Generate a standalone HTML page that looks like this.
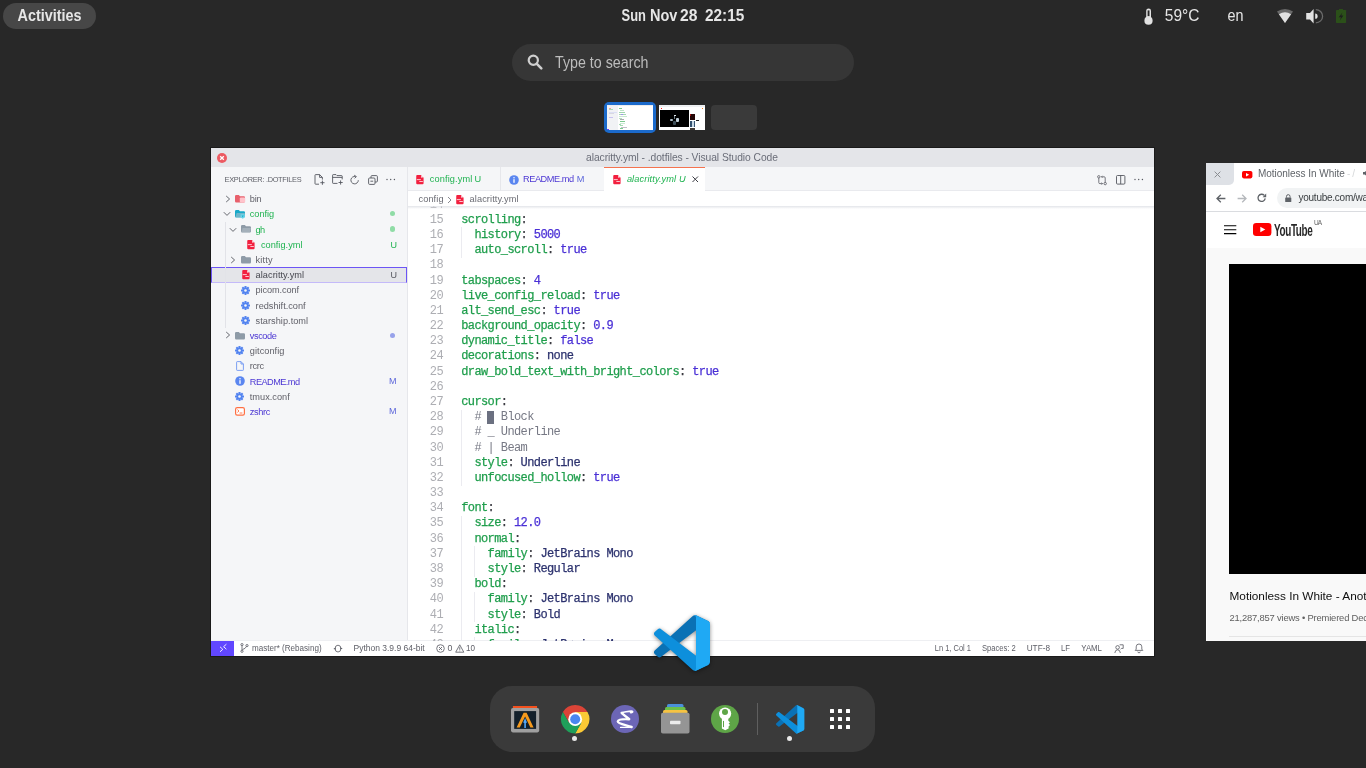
<!DOCTYPE html>
<html><head><meta charset="utf-8"><style>
html,body{margin:0;padding:0;width:1366px;height:768px;overflow:hidden;background:#282828;}
body{position:relative;font-family:"Liberation Sans",sans-serif;}
div,svg{position:absolute;}
.t{white-space:pre;}
svg{overflow:visible;}
</style></head><body>
<div style="left:0;top:0;width:1366px;height:768px;will-change:transform;background:#282828">
<div style="left:3px;top:3px;width:93px;height:26px;background:#474747;border-radius:13px;"></div>
<div class="t" style="left:17.50px;top:8.00px;font-size:14.39px;line-height:16.00px;color:#e6e6e6;font-family:'Liberation Sans', sans-serif;font-weight:bold;transform:scaleY(1.111);transform-origin:0 13px;">Activities</div>
<div class="t" style="left:621.60px;top:9.00px;font-size:12.92px;line-height:15.00px;color:#e6e6e6;font-family:'Liberation Sans', sans-serif;font-weight:bold;transform:scaleY(1.237);transform-origin:0 12px;">Sun</div>
<div class="t" style="left:650.00px;top:8.00px;font-size:14.5px;line-height:16.00px;color:#e6e6e6;font-family:'Liberation Sans', sans-serif;font-weight:bold;transform:scaleY(1.103);transform-origin:0 13px;">Nov</div>
<div class="t" style="left:680.00px;top:7.00px;font-size:15.64px;line-height:17.00px;color:#e6e6e6;font-family:'Liberation Sans', sans-serif;font-weight:bold;transform:scaleY(1.022);transform-origin:0 14px;">28</div>
<div class="t" style="left:705.00px;top:7.00px;font-size:15.4px;line-height:17.00px;color:#e6e6e6;font-family:'Liberation Sans', sans-serif;font-weight:bold;transform:scaleY(1.038);transform-origin:0 14px;">22:15</div>
<div class="t" style="left:1164.80px;top:7.00px;font-size:15.49px;line-height:17.00px;color:#e6e6e6;font-family:'Liberation Sans', sans-serif;transform:scaleY(1.032);transform-origin:0 14px;">59°C</div>
<div class="t" style="left:1227.60px;top:8.00px;font-size:14.38px;line-height:16.00px;color:#e6e6e6;font-family:'Liberation Sans', sans-serif;transform:scaleY(1.112);transform-origin:0 13px;">en</div>
<svg style="left:1143.5px;top:7.5px" width="9" height="17" viewBox="0 0 9 17"><rect x="2.2" y="0.4" width="4.8" height="11" rx="2.4" fill="#e2e2e2"/><rect x="3.6" y="2.4" width="1.9" height="5.8" fill="#282828"/><circle cx="4.5" cy="12.7" r="4.1" fill="#e2e2e2"/></svg>
<svg style="left:1277px;top:9px" width="16" height="14" viewBox="0 0 16 14"><path d="M8 14 L-0.03 2.53 A14 14 0 0 1 16.03 2.53Z" fill="#6a6a6a"/><path d="M8 14 L1.92 5.32 A10.6 10.6 0 0 1 14.08 5.32Z" fill="#e2e2e2"/></svg>
<svg style="left:1305.5px;top:8.8px" width="16" height="15" viewBox="0 0 16 15"><path d="M0.2 3.9 H4 L7.6 0 V14.4 L4 10.5 H0.2Z" fill="#e2e2e2"/><path d="M9.2 4.6 A2.4 2.6 0 0 1 9.2 9.8Z" fill="#e2e2e2"/><path d="M9.8 0.6 A6.8 6.6 0 0 1 9.8 13.8" stroke="#6c6c6c" stroke-width="1.3" fill="none"/></svg>
<svg style="left:1336px;top:9px" width="10.1" height="14" viewBox="0 0 10.1 14"><rect x="3" y="0" width="4" height="1.5" fill="#2b5019"/><rect x="0" y="1" width="10.1" height="12.9" rx=".6" fill="#2b5019"/><path d="M6.4 3.4 L2.8 8.2 H5 L3.9 11.4 L7.4 6.6 H5.2Z" fill="#1e1e1e"/></svg>
<div style="left:512px;top:44px;width:342px;height:37px;background:#363636;border-radius:18.5px;"></div>
<svg style="left:527px;top:54px" width="16" height="16" viewBox="0 0 16 16"><circle cx="6.3" cy="6.3" r="4.6" stroke="#cfcfcf" stroke-width="2.2" fill="none"/><path d="M9.6 9.6 L14.3 14.3" stroke="#cfcfcf" stroke-width="2.6" stroke-linecap="round"/></svg>
<div class="t" style="left:555.00px;top:55.00px;font-size:14.25px;line-height:16.00px;color:#bdbdbd;font-family:'Liberation Sans', sans-serif;transform:scaleY(1.112);transform-origin:0 13px;">Type to search</div>
<div style="left:604px;top:102px;width:52px;height:31px;background:#1b6acb;border-radius:5px;"></div>
<div style="left:607px;top:105px;width:46px;height:25px;background:#ffffff;"></div>
<div style="left:607px;top:105px;width:10.5px;height:25px;background:#f1f2f5;"></div>
<div style="left:607px;top:105px;width:46px;height:1px;background:#ecedf0;"></div>
<div style="left:619px;top:108px;width:3px;height:1px;background:#7dc98f;"></div>
<div style="left:620px;top:109.5px;width:4px;height:1px;background:#bfe3c8;"></div>
<div style="left:619px;top:112px;width:6px;height:1px;background:#9fd6ad;"></div>
<div style="left:619px;top:114px;width:7px;height:1px;background:#a6d9b3;"></div>
<div style="left:621px;top:114px;width:1.5px;height:1px;background:#9d94ea;"></div>
<div style="left:619px;top:116px;width:7.5px;height:1px;background:#c8e8d0;"></div>
<div style="left:619px;top:117.5px;width:3px;height:1px;background:#b5dfc0;"></div>
<div style="left:620px;top:119px;width:4px;height:1px;background:#aaaaaf;"></div>
<div style="left:620px;top:121px;width:5px;height:1px;background:#7dc98f;"></div>
<div style="left:620px;top:122.5px;width:5px;height:1px;background:#c9e9d2;"></div>
<div style="left:619px;top:124px;width:2px;height:1px;background:#a6d9b3;"></div>
<div style="left:620px;top:125px;width:3px;height:1px;background:#a6d9b3;"></div>
<div style="left:621px;top:126.5px;width:6px;height:1px;background:#c0c0c8;"></div>
<div style="left:620px;top:128px;width:3px;height:1px;background:#7dc98f;"></div>
<div style="left:608.5px;top:107.5px;width:2px;height:1px;background:#f29aa0;"></div>
<div style="left:608.5px;top:109px;width:4px;height:1px;background:#a6dcb4;"></div>
<div style="left:608.5px;top:111.5px;width:8px;height:1px;background:#dcdff5;"></div>
<div style="left:608.5px;top:113px;width:5px;height:1px;background:#d8d8e0;"></div>
<div style="left:608.5px;top:117px;width:4px;height:1px;background:#c9c2f0;"></div>
<div style="left:607px;top:129px;width:1.5px;height:1px;background:#6147ff;"></div>
<div style="left:659px;top:105px;width:46px;height:25px;background:#ffffff;"></div>
<div style="left:659px;top:105px;width:46px;height:1.5px;background:#eef0f2;"></div>
<div style="left:660px;top:110px;width:28.8px;height:16.8px;background:#000000;"></div>
<div style="left:673.6px;top:114.6px;width:2px;height:1.4px;background:#dfe6ea;"></div>
<div style="left:674.1px;top:116px;width:1.2px;height:3px;background:#6d7b84;"></div>
<div style="left:670.2px;top:118.6px;width:3px;height:2.6px;background:#aebfcb;border-radius:1px;"></div>
<div style="left:676px;top:118.4px;width:3px;height:3.2px;background:#c2d0da;border-radius:1px;"></div>
<div style="left:672.8px;top:121.4px;width:3.4px;height:3.2px;background:#3e4e58;border-radius:1px;"></div>
<div style="left:660.5px;top:108px;width:1.5px;height:1px;background:#ff2020;"></div>
<div style="left:690px;top:114px;width:5px;height:5.5px;background:#240606;"></div>
<div style="left:690px;top:114px;width:1px;height:2px;background:#a01010;"></div>
<div style="left:690px;top:121px;width:5px;height:6px;background:#32506e;"></div>
<div style="left:692px;top:121px;width:1.5px;height:6px;background:#c8d8e4;"></div>
<div style="left:690px;top:128px;width:5px;height:2px;background:#403a36;"></div>
<div style="left:696px;top:120px;width:2.5px;height:1px;background:#202020;"></div>
<div style="left:702px;top:108px;width:1px;height:1px;background:#f08020;"></div>
<div style="left:711px;top:105px;width:46px;height:25px;background:#3a3a3a;border-radius:4px;"></div>
<div style="left:211px;top:148px;width:943px;height:508px;background:#ffffff;box-shadow:0 0 0 1px rgba(0,0,0,.35);"></div>
<div style="left:211px;top:148px;width:943px;height:19px;background:#e4e5e9;"></div>
<svg style="left:217px;top:152.5px" width="10" height="10" viewBox="0 0 10 10"><circle cx="5" cy="5" r="5" fill="#ec5a62"/><path d="M3.2 3.2L6.8 6.8M6.8 3.2L3.2 6.8" stroke="#fff" stroke-width="1.3"/></svg>
<div class="t" style="left:586.00px;top:152.00px;font-size:10.3px;line-height:11.00px;color:#6a6d78;font-family:'Liberation Sans', sans-serif;letter-spacing:-0.063px;">alacritty.yml - .dotfiles - Visual Studio Code</div>
<div style="left:211px;top:167px;width:196px;height:474px;background:#f5f6f8;"></div>
<div style="left:407px;top:167px;width:1px;height:474px;background:#e6e7eb;"></div>
<div class="t" style="left:224.60px;top:175.00px;font-size:7.4px;line-height:9.00px;color:#5f6068;font-family:'Liberation Sans', sans-serif;letter-spacing:-0.306px;">EXPLORER: .DOTFILES</div>
<div style="left:408px;top:167px;width:746px;height:24px;background:#f5f6f8;"></div>
<div style="left:408px;top:190px;width:746px;height:1px;background:#e9eaee;"></div>
<div style="left:500px;top:167px;width:1px;height:24px;background:#e6e7eb;"></div>
<div style="left:604px;top:167px;width:101px;height:24px;background:#ffffff;"></div>
<div style="left:604px;top:167px;width:101px;height:1px;background:#f5734f;"></div>
<div style="left:408px;top:191px;width:746px;height:15px;background:#ffffff;"></div>
<div style="left:211px;top:641px;width:943px;height:15px;background:#ffffff;"></div>
<div style="left:211px;top:640px;width:943px;height:1px;background:#eeeff2;"></div>
<div style="left:211px;top:641px;width:23px;height:15px;background:#6147ff;"></div>
<div style="left:211px;top:267px;width:196px;height:16px;background:#e4e5e9;box-sizing:border-box;border:1px solid #6c55f5;border-bottom-color:#c4baf9;"></div>
<div style="left:225px;top:222px;width:1px;height:106px;background:#e2e3e8;"></div>
<svg style="left:224.5px;top:194.8px" width="6" height="8" viewBox="0 0 6 8"><path d="M1.2 1 L4.6 4 L1.2 7" stroke="#55575f" stroke-width="0.9" fill="none"/></svg>
<svg style="left:235px;top:195.10000000000002px" width="10" height="8" viewBox="0 0 10 8"><path d="M0 1.2 Q0 0 1.2 0 H3.8 L5 1.2 H8.8 Q10 1.2 10 2.4 V6.2 Q10 7.4 8.8 7.4 H1.2 Q0 7.4 0 6.2Z" fill="#e8606c"/><rect x="4.8" y="2.6" width="5.4" height="5" rx="1" fill="#ffc3cb"/></svg>
<div class="t" style="left:249.80px;top:194.00px;font-size:9.2px;line-height:10.00px;color:#616169;font-family:'Liberation Sans', sans-serif;letter-spacing:-0.208px;">bin</div>
<svg style="left:222.7px;top:211.485px" width="8" height="6" viewBox="0 0 8 6"><path d="M0.8 1.2 L4 4.4 L7.2 1.2" stroke="#55575f" stroke-width="0.9" fill="none"/></svg>
<svg style="left:235px;top:210.28500000000003px" width="10" height="8" viewBox="0 0 10 8"><path d="M0 1.2 Q0 0 1.2 0 H3.8 L5 1.2 H8.8 Q10 1.2 10 2.4 V6.2 Q10 7.4 8.8 7.4 H1.2 Q0 7.4 0 6.2Z" fill="#17a9c9"/><path d="M1.6 3 H10 L9 7.4 H0.4Z" fill="#b7c1ca" opacity=".55"/><path d="M5.6 4.2 H9.8 V6.4 Q9.8 7.8 7.7 8.8 Q5.6 7.8 5.6 6.4Z" fill="#6fd6ea"/><path d="M6.6 5.4 H8.8 L7.7 7.4Z" fill="#17a9c9"/></svg>
<div class="t" style="left:249.80px;top:209.00px;font-size:9.2px;line-height:10.00px;color:#1fb350;font-family:'Liberation Sans', sans-serif;letter-spacing:-0.033px;">config</div>
<div style="left:390px;top:211.29px;width:5.2px;height:5.2px;border-radius:50%;background:#8fdca6"></div>
<svg style="left:228.5px;top:226.67000000000002px" width="8" height="6" viewBox="0 0 8 6"><path d="M0.8 1.2 L4 4.4 L7.2 1.2" stroke="#55575f" stroke-width="0.9" fill="none"/></svg>
<svg style="left:240.8px;top:225.47000000000003px" width="10" height="8" viewBox="0 0 10 8"><path d="M0 1.2 Q0 0 1.2 0 H3.8 L5 1.2 H8.8 Q10 1.2 10 2.4 V6.2 Q10 7.4 8.8 7.4 H1.2 Q0 7.4 0 6.2Z" fill="#8e9ba7"/><path d="M1.6 3 H10 L9 7.4 H0.4Z" fill="#b7c1ca" opacity=".55"/></svg>
<div class="t" style="left:255.60px;top:225.00px;font-size:9.2px;line-height:10.00px;color:#1fb350;font-family:'Liberation Sans', sans-serif;letter-spacing:-0.619px;">gh</div>
<div style="left:390px;top:226.47px;width:5.2px;height:5.2px;border-radius:50%;background:#8fdca6"></div>
<svg style="left:247.2px;top:239.75500000000002px" width="7.8" height="9.2" viewBox="0 0 8 10"><path d="M0 1.1 Q0 0 1.1 0 H5 L8 3 V8.9 Q8 10 6.9 10 H1.1 Q0 10 0 8.9Z" fill="#f2203f"/><path d="M0.6 5 H5 M3.4 7.1 H7.2" stroke="#ffd6dc" stroke-width="1"/><circle cx="6.2" cy="2.1" r=".9" fill="#fff"/></svg>
<div class="t" style="left:260.90px;top:240.00px;font-size:9.2px;line-height:10.00px;color:#1fb350;font-family:'Liberation Sans', sans-serif;letter-spacing:0.027px;">config.yml</div>
<div class="t" style="left:390.50px;top:240.00px;font-size:9px;line-height:10.00px;color:#1fb350;font-family:'Liberation Sans', sans-serif;">U</div>
<svg style="left:230.3px;top:255.54000000000002px" width="6" height="8" viewBox="0 0 6 8"><path d="M1.2 1 L4.6 4 L1.2 7" stroke="#55575f" stroke-width="0.9" fill="none"/></svg>
<svg style="left:240.8px;top:255.84000000000003px" width="10" height="8" viewBox="0 0 10 8"><path d="M0 1.2 Q0 0 1.2 0 H3.8 L5 1.2 H8.8 Q10 1.2 10 2.4 V6.2 Q10 7.4 8.8 7.4 H1.2 Q0 7.4 0 6.2Z" fill="#8e9ba7"/></svg>
<div class="t" style="left:255.60px;top:255.00px;font-size:9.2px;line-height:10.00px;color:#616169;font-family:'Liberation Sans', sans-serif;letter-spacing:0.143px;">kitty</div>
<svg style="left:241.60000000000002px;top:270.125px" width="7.8" height="9.2" viewBox="0 0 8 10"><path d="M0 1.1 Q0 0 1.1 0 H5 L8 3 V8.9 Q8 10 6.9 10 H1.1 Q0 10 0 8.9Z" fill="#f2203f"/><path d="M0.6 5 H5 M3.4 7.1 H7.2" stroke="#ffd6dc" stroke-width="1"/><circle cx="6.2" cy="2.1" r=".9" fill="#fff"/></svg>
<div class="t" style="left:255.60px;top:270.00px;font-size:9.2px;line-height:10.00px;color:#45464e;font-family:'Liberation Sans', sans-serif;letter-spacing:0.057px;">alacritty.yml</div>
<div class="t" style="left:390.50px;top:270.00px;font-size:9px;line-height:10.00px;color:#55565e;font-family:'Liberation Sans', sans-serif;">U</div>
<svg style="left:240.8px;top:285.51000000000005px" width="9" height="9" viewBox="0 0 9 9"><g transform="translate(4.5 4.5)"><circle r="3.1" fill="#5384f0"/><rect x="-1.05" y="-4.5" width="2.1" height="2.4" rx=".4" fill="#5384f0" transform="rotate(0)"/><rect x="-1.05" y="-4.5" width="2.1" height="2.4" rx=".4" fill="#5384f0" transform="rotate(45)"/><rect x="-1.05" y="-4.5" width="2.1" height="2.4" rx=".4" fill="#5384f0" transform="rotate(90)"/><rect x="-1.05" y="-4.5" width="2.1" height="2.4" rx=".4" fill="#5384f0" transform="rotate(135)"/><rect x="-1.05" y="-4.5" width="2.1" height="2.4" rx=".4" fill="#5384f0" transform="rotate(180)"/><rect x="-1.05" y="-4.5" width="2.1" height="2.4" rx=".4" fill="#5384f0" transform="rotate(225)"/><rect x="-1.05" y="-4.5" width="2.1" height="2.4" rx=".4" fill="#5384f0" transform="rotate(270)"/><rect x="-1.05" y="-4.5" width="2.1" height="2.4" rx=".4" fill="#5384f0" transform="rotate(315)"/><circle r="1.3" fill="#f5f6f8"/></g></svg>
<div class="t" style="left:255.60px;top:285.00px;font-size:9.2px;line-height:10.00px;color:#616169;font-family:'Liberation Sans', sans-serif;letter-spacing:-0.114px;">picom.conf</div>
<svg style="left:240.8px;top:300.69500000000005px" width="9" height="9" viewBox="0 0 9 9"><g transform="translate(4.5 4.5)"><circle r="3.1" fill="#5384f0"/><rect x="-1.05" y="-4.5" width="2.1" height="2.4" rx=".4" fill="#5384f0" transform="rotate(0)"/><rect x="-1.05" y="-4.5" width="2.1" height="2.4" rx=".4" fill="#5384f0" transform="rotate(45)"/><rect x="-1.05" y="-4.5" width="2.1" height="2.4" rx=".4" fill="#5384f0" transform="rotate(90)"/><rect x="-1.05" y="-4.5" width="2.1" height="2.4" rx=".4" fill="#5384f0" transform="rotate(135)"/><rect x="-1.05" y="-4.5" width="2.1" height="2.4" rx=".4" fill="#5384f0" transform="rotate(180)"/><rect x="-1.05" y="-4.5" width="2.1" height="2.4" rx=".4" fill="#5384f0" transform="rotate(225)"/><rect x="-1.05" y="-4.5" width="2.1" height="2.4" rx=".4" fill="#5384f0" transform="rotate(270)"/><rect x="-1.05" y="-4.5" width="2.1" height="2.4" rx=".4" fill="#5384f0" transform="rotate(315)"/><circle r="1.3" fill="#f5f6f8"/></g></svg>
<div class="t" style="left:255.60px;top:301.00px;font-size:9.2px;line-height:10.00px;color:#616169;font-family:'Liberation Sans', sans-serif;letter-spacing:-0.003px;">redshift.conf</div>
<svg style="left:240.8px;top:315.88000000000005px" width="9" height="9" viewBox="0 0 9 9"><g transform="translate(4.5 4.5)"><circle r="3.1" fill="#5384f0"/><rect x="-1.05" y="-4.5" width="2.1" height="2.4" rx=".4" fill="#5384f0" transform="rotate(0)"/><rect x="-1.05" y="-4.5" width="2.1" height="2.4" rx=".4" fill="#5384f0" transform="rotate(45)"/><rect x="-1.05" y="-4.5" width="2.1" height="2.4" rx=".4" fill="#5384f0" transform="rotate(90)"/><rect x="-1.05" y="-4.5" width="2.1" height="2.4" rx=".4" fill="#5384f0" transform="rotate(135)"/><rect x="-1.05" y="-4.5" width="2.1" height="2.4" rx=".4" fill="#5384f0" transform="rotate(180)"/><rect x="-1.05" y="-4.5" width="2.1" height="2.4" rx=".4" fill="#5384f0" transform="rotate(225)"/><rect x="-1.05" y="-4.5" width="2.1" height="2.4" rx=".4" fill="#5384f0" transform="rotate(270)"/><rect x="-1.05" y="-4.5" width="2.1" height="2.4" rx=".4" fill="#5384f0" transform="rotate(315)"/><circle r="1.3" fill="#f5f6f8"/></g></svg>
<div class="t" style="left:255.60px;top:316.00px;font-size:9.2px;line-height:10.00px;color:#616169;font-family:'Liberation Sans', sans-serif;letter-spacing:0.035px;">starship.toml</div>
<svg style="left:224.5px;top:331.46500000000003px" width="6" height="8" viewBox="0 0 6 8"><path d="M1.2 1 L4.6 4 L1.2 7" stroke="#55575f" stroke-width="0.9" fill="none"/></svg>
<svg style="left:235px;top:331.76500000000004px" width="10" height="8" viewBox="0 0 10 8"><path d="M0 1.2 Q0 0 1.2 0 H3.8 L5 1.2 H8.8 Q10 1.2 10 2.4 V6.2 Q10 7.4 8.8 7.4 H1.2 Q0 7.4 0 6.2Z" fill="#8e9ba7"/></svg>
<div class="t" style="left:249.80px;top:331.00px;font-size:9.2px;line-height:10.00px;color:#4c37d3;font-family:'Liberation Sans', sans-serif;letter-spacing:-0.402px;">vscode</div>
<div style="left:390px;top:332.77px;width:5.2px;height:5.2px;border-radius:50%;background:#97a2ea"></div>
<svg style="left:235px;top:346.25px" width="9" height="9" viewBox="0 0 9 9"><g transform="translate(4.5 4.5)"><circle r="3.1" fill="#5384f0"/><rect x="-1.05" y="-4.5" width="2.1" height="2.4" rx=".4" fill="#5384f0" transform="rotate(0)"/><rect x="-1.05" y="-4.5" width="2.1" height="2.4" rx=".4" fill="#5384f0" transform="rotate(45)"/><rect x="-1.05" y="-4.5" width="2.1" height="2.4" rx=".4" fill="#5384f0" transform="rotate(90)"/><rect x="-1.05" y="-4.5" width="2.1" height="2.4" rx=".4" fill="#5384f0" transform="rotate(135)"/><rect x="-1.05" y="-4.5" width="2.1" height="2.4" rx=".4" fill="#5384f0" transform="rotate(180)"/><rect x="-1.05" y="-4.5" width="2.1" height="2.4" rx=".4" fill="#5384f0" transform="rotate(225)"/><rect x="-1.05" y="-4.5" width="2.1" height="2.4" rx=".4" fill="#5384f0" transform="rotate(270)"/><rect x="-1.05" y="-4.5" width="2.1" height="2.4" rx=".4" fill="#5384f0" transform="rotate(315)"/><circle r="1.3" fill="#f5f6f8"/></g></svg>
<div class="t" style="left:249.80px;top:346.00px;font-size:9.2px;line-height:10.00px;color:#616169;font-family:'Liberation Sans', sans-serif;letter-spacing:0.048px;">gitconfig</div>
<svg style="left:235.6px;top:361.035px" width="8" height="10" viewBox="0 0 8 10"><path d="M0.6 1.2 Q0.6 0.6 1.2 0.6 H5 L7.4 3 V8.8 Q7.4 9.4 6.8 9.4 H1.2 Q0.6 9.4 0.6 8.8Z M5 0.6 V3 H7.4" stroke="#6e95f2" stroke-width="0.9" fill="none"/></svg>
<div class="t" style="left:249.80px;top:361.00px;font-size:9.2px;line-height:10.00px;color:#616169;font-family:'Liberation Sans', sans-serif;letter-spacing:-0.354px;">rcrc</div>
<svg style="left:235px;top:376.21999999999997px" width="10" height="10" viewBox="0 0 10 10"><circle cx="5" cy="5" r="4.8" fill="#5a86f0"/><rect x="4.35" y="4.2" width="1.3" height="3.6" fill="#fff"/><circle cx="5" cy="2.8" r=".75" fill="#fff"/></svg>
<div class="t" style="left:249.80px;top:377.00px;font-size:9.2px;line-height:10.00px;color:#4c37d3;font-family:'Liberation Sans', sans-serif;letter-spacing:-0.547px;">README.md</div>
<div class="t" style="left:388.90px;top:376.00px;font-size:9px;line-height:10.00px;color:#5b66da;font-family:'Liberation Sans', sans-serif;">M</div>
<svg style="left:235px;top:391.80500000000006px" width="9" height="9" viewBox="0 0 9 9"><g transform="translate(4.5 4.5)"><circle r="3.1" fill="#5384f0"/><rect x="-1.05" y="-4.5" width="2.1" height="2.4" rx=".4" fill="#5384f0" transform="rotate(0)"/><rect x="-1.05" y="-4.5" width="2.1" height="2.4" rx=".4" fill="#5384f0" transform="rotate(45)"/><rect x="-1.05" y="-4.5" width="2.1" height="2.4" rx=".4" fill="#5384f0" transform="rotate(90)"/><rect x="-1.05" y="-4.5" width="2.1" height="2.4" rx=".4" fill="#5384f0" transform="rotate(135)"/><rect x="-1.05" y="-4.5" width="2.1" height="2.4" rx=".4" fill="#5384f0" transform="rotate(180)"/><rect x="-1.05" y="-4.5" width="2.1" height="2.4" rx=".4" fill="#5384f0" transform="rotate(225)"/><rect x="-1.05" y="-4.5" width="2.1" height="2.4" rx=".4" fill="#5384f0" transform="rotate(270)"/><rect x="-1.05" y="-4.5" width="2.1" height="2.4" rx=".4" fill="#5384f0" transform="rotate(315)"/><circle r="1.3" fill="#f5f6f8"/></g></svg>
<div class="t" style="left:249.80px;top:392.00px;font-size:9.2px;line-height:10.00px;color:#616169;font-family:'Liberation Sans', sans-serif;letter-spacing:0.023px;">tmux.conf</div>
<svg style="left:235px;top:407.09px" width="10" height="9" viewBox="0 0 10 9"><rect x="0.6" y="0.6" width="8.8" height="7.6" rx="1.6" fill="#fff" stroke="#ff7043" stroke-width="1.2"/><path d="M2.4 2.6 L4 4 L2.4 5.4 M4.6 6 H7.4" stroke="#ff7043" stroke-width="0.9" fill="none"/></svg>
<div class="t" style="left:249.80px;top:407.00px;font-size:9.2px;line-height:10.00px;color:#4c37d3;font-family:'Liberation Sans', sans-serif;letter-spacing:-0.363px;">zshrc</div>
<div class="t" style="left:388.90px;top:406.00px;font-size:9px;line-height:10.00px;color:#5b66da;font-family:'Liberation Sans', sans-serif;">M</div>
<svg style="left:314px;top:174px" width="12" height="11" viewBox="0 0 12 11"><path d="M1 1.2 Q1 0.6 1.6 0.6 H5.6 L8.4 3.4 V5.6 M8.4 3.4 H5.6 V0.6 M1 1.2 V9.6 Q1 10.2 1.6 10.2 H5" stroke="#55575f" stroke-width="0.9" fill="none"/><path d="M8.4 6.6 V10.8 M6.3 8.7 H10.5" stroke="#55575f" stroke-width="0.9"/></svg>
<svg style="left:332px;top:174px" width="12" height="11" viewBox="0 0 12 11"><path d="M5.5 9.4 H1.2 Q0.6 9.4 0.6 8.8 V1.2 Q0.6 0.6 1.2 0.6 H4 L5 1.6 H9.6 Q10.2 1.6 10.2 2.2 V5.4 M0.6 3.4 H10.2" stroke="#55575f" stroke-width="0.9" fill="none"/><path d="M8.6 6.4 V10.6 M6.5 8.5 H10.7" stroke="#55575f" stroke-width="0.9"/></svg>
<svg style="left:350px;top:175px" width="10" height="10" viewBox="0 0 10 10"><path d="M8.3 5.2 A3.7 3.7 0 1 1 5.6 1.6" stroke="#55575f" stroke-width="0.9" fill="none"/><path d="M4.2 0.2 L6.4 1.6 L4.6 3.3" stroke="#55575f" stroke-width="0.9" fill="none"/></svg>
<svg style="left:368px;top:175px" width="10" height="10" viewBox="0 0 10 10"><rect x="0.6" y="3" width="6.4" height="6.4" rx="1" stroke="#55575f" stroke-width="0.9" fill="none"/><path d="M3 3 V1.6 Q3 0.6 4 0.6 H8.4 Q9.4 0.6 9.4 1.6 V6 Q9.4 7 8.4 7 H7 M2.4 6.2 H5.2" stroke="#55575f" stroke-width="0.9" fill="none"/></svg>
<svg style="left:386px;top:178px" width="10" height="3" viewBox="0 0 10 3"><circle cx="1" cy="1.5" r=".7" fill="#55575f"/><circle cx="4.7" cy="1.5" r=".7" fill="#55575f"/><circle cx="8.4" cy="1.5" r=".7" fill="#55575f"/></svg>
<svg style="left:416px;top:174.7px" width="7.8" height="9.2" viewBox="0 0 8 10"><path d="M0 1.1 Q0 0 1.1 0 H5 L8 3 V8.9 Q8 10 6.9 10 H1.1 Q0 10 0 8.9Z" fill="#f2203f"/><path d="M0.6 5 H5 M3.4 7.1 H7.2" stroke="#ffd6dc" stroke-width="1"/><circle cx="6.2" cy="2.1" r=".9" fill="#fff"/></svg>
<div class="t" style="left:429.80px;top:174.00px;font-size:9.2px;line-height:10.00px;color:#1fb350;font-family:'Liberation Sans', sans-serif;letter-spacing:0.116px;">config.yml</div>
<div class="t" style="left:474.60px;top:174.00px;font-size:9.2px;line-height:10.00px;color:#1fb350;font-family:'Liberation Sans', sans-serif;">U</div>
<svg style="left:508.7px;top:175px" width="10" height="10" viewBox="0 0 10 10"><circle cx="5" cy="5" r="4.8" fill="#5a86f0"/><rect x="4.35" y="4.2" width="1.3" height="3.6" fill="#fff"/><circle cx="5" cy="2.8" r=".75" fill="#fff"/></svg>
<div class="t" style="left:523.00px;top:174.00px;font-size:9.2px;line-height:10.00px;color:#4c37d3;font-family:'Liberation Sans', sans-serif;letter-spacing:-0.428px;">README.md</div>
<div class="t" style="left:576.80px;top:174.00px;font-size:9.2px;line-height:10.00px;color:#5b66da;font-family:'Liberation Sans', sans-serif;">M</div>
<svg style="left:612.8px;top:174.7px" width="7.8" height="9.2" viewBox="0 0 8 10"><path d="M0 1.1 Q0 0 1.1 0 H5 L8 3 V8.9 Q8 10 6.9 10 H1.1 Q0 10 0 8.9Z" fill="#f2203f"/><path d="M0.6 5 H5 M3.4 7.1 H7.2" stroke="#ffd6dc" stroke-width="1"/><circle cx="6.2" cy="2.1" r=".9" fill="#fff"/></svg>
<div class="t" style="left:626.90px;top:174.00px;font-size:9.2px;line-height:10.00px;color:#1fb350;font-family:'Liberation Sans', sans-serif;font-style:italic;letter-spacing:0.121px;">alacritty.yml U</div>
<svg style="left:691.7px;top:176.2px" width="6.5" height="6.5" viewBox="0 0 6.5 6.5"><path d="M0.5 0.5 L6 6 M6 0.5 L0.5 6" stroke="#3c3d44" stroke-width="1"/></svg>
<svg style="left:1097px;top:174.5px" width="10" height="10.5" viewBox="0 0 10 10.5"><circle cx="1.8" cy="1.8" r="1.2" stroke="#55575f" stroke-width=".8" fill="none"/><circle cx="8.2" cy="8.6" r="1.2" stroke="#55575f" stroke-width=".8" fill="none"/><path d="M1.8 3 V7.6 Q1.8 8.6 2.8 8.6 H5.4 M4.6 7.6 L5.6 8.6 L4.6 9.6 M8.2 7.4 V2.8 Q8.2 1.8 7.2 1.8 H4.6 M5.4 0.8 L4.4 1.8 L5.4 2.8" stroke="#55575f" stroke-width=".8" fill="none"/></svg>
<svg style="left:1116px;top:174.5px" width="9.5" height="9.5" viewBox="0 0 9.5 9.5"><rect x="0.5" y="0.5" width="8.4" height="8.6" rx="1" stroke="#55575f" stroke-width=".9" fill="none"/><path d="M4.7 0.5 V9" stroke="#55575f" stroke-width=".9"/></svg>
<svg style="left:1133.5px;top:178px" width="10" height="3" viewBox="0 0 10 3"><circle cx="1" cy="1.5" r=".7" fill="#55575f"/><circle cx="4.7" cy="1.5" r=".7" fill="#55575f"/><circle cx="8.4" cy="1.5" r=".7" fill="#55575f"/></svg>
<div class="t" style="left:418.50px;top:194.00px;font-size:9.2px;line-height:10.00px;color:#6a6b73;font-family:'Liberation Sans', sans-serif;letter-spacing:0.097px;">config</div>
<svg style="left:447px;top:195.5px" width="5" height="8" viewBox="0 0 5 8"><path d="M1 1 L4 4 L1 7" stroke="#6a6b73" stroke-width=".8" fill="none"/></svg>
<svg style="left:456.3px;top:194.8px" width="7.8" height="9.2" viewBox="0 0 8 10"><path d="M0 1.1 Q0 0 1.1 0 H5 L8 3 V8.9 Q8 10 6.9 10 H1.1 Q0 10 0 8.9Z" fill="#f2203f"/><path d="M0.6 5 H5 M3.4 7.1 H7.2" stroke="#ffd6dc" stroke-width="1"/><circle cx="6.2" cy="2.1" r=".9" fill="#fff"/></svg>
<div class="t" style="left:469.60px;top:194.00px;font-size:9.2px;line-height:10.00px;color:#6a6b73;font-family:'Liberation Sans', sans-serif;letter-spacing:0.099px;">alacritty.yml</div>
<div style="left:408px;top:206px;width:746px;height:434.5px;overflow:hidden;">
<div class="t" style="left:21.80px;top:-8.00px;font-size:12px;line-height:14.00px;color:#adaeb3;font-family:'Liberation Mono', monospace;letter-spacing:-0.6px;">14</div>
<div class="t" style="left:21.80px;top:7.00px;font-size:12px;line-height:14.00px;color:#adaeb3;font-family:'Liberation Mono', monospace;letter-spacing:-0.6px;">15</div>
<div class="t" style="left:53.20px;top:7.00px;font-size:12px;line-height:14.00px;color:#1f9e4c;font-family:'Liberation Mono', monospace;letter-spacing:-0.6px;-webkit-text-stroke:0.25px #1f9e4c;">scrolling</div>
<div class="t" style="left:112.60px;top:7.00px;font-size:12px;line-height:14.00px;color:#3b3b42;font-family:'Liberation Mono', monospace;letter-spacing:-0.6px;-webkit-text-stroke:0.25px #3b3b42;">:</div>
<div class="t" style="left:21.80px;top:22.00px;font-size:12px;line-height:14.00px;color:#adaeb3;font-family:'Liberation Mono', monospace;letter-spacing:-0.6px;">16</div>
<div class="t" style="left:66.40px;top:22.00px;font-size:12px;line-height:14.00px;color:#1f9e4c;font-family:'Liberation Mono', monospace;letter-spacing:-0.6px;-webkit-text-stroke:0.25px #1f9e4c;">history</div>
<div class="t" style="left:112.60px;top:22.00px;font-size:12px;line-height:14.00px;color:#3b3b42;font-family:'Liberation Mono', monospace;letter-spacing:-0.6px;-webkit-text-stroke:0.25px #3b3b42;">:</div>
<div class="t" style="left:125.80px;top:22.00px;font-size:12px;line-height:14.00px;color:#4a30d6;font-family:'Liberation Mono', monospace;letter-spacing:-0.6px;-webkit-text-stroke:0.25px #4a30d6;">5000</div>
<div class="t" style="left:21.80px;top:37.00px;font-size:12px;line-height:14.00px;color:#adaeb3;font-family:'Liberation Mono', monospace;letter-spacing:-0.6px;">17</div>
<div class="t" style="left:66.40px;top:37.00px;font-size:12px;line-height:14.00px;color:#1f9e4c;font-family:'Liberation Mono', monospace;letter-spacing:-0.6px;-webkit-text-stroke:0.25px #1f9e4c;">auto_scroll</div>
<div class="t" style="left:139.00px;top:37.00px;font-size:12px;line-height:14.00px;color:#3b3b42;font-family:'Liberation Mono', monospace;letter-spacing:-0.6px;-webkit-text-stroke:0.25px #3b3b42;">:</div>
<div class="t" style="left:152.20px;top:37.00px;font-size:12px;line-height:14.00px;color:#4a30d6;font-family:'Liberation Mono', monospace;letter-spacing:-0.6px;-webkit-text-stroke:0.25px #4a30d6;">true</div>
<div class="t" style="left:21.80px;top:52.00px;font-size:12px;line-height:14.00px;color:#adaeb3;font-family:'Liberation Mono', monospace;letter-spacing:-0.6px;">18</div>
<div class="t" style="left:21.80px;top:68.00px;font-size:12px;line-height:14.00px;color:#adaeb3;font-family:'Liberation Mono', monospace;letter-spacing:-0.6px;">19</div>
<div class="t" style="left:53.20px;top:68.00px;font-size:12px;line-height:14.00px;color:#1f9e4c;font-family:'Liberation Mono', monospace;letter-spacing:-0.6px;-webkit-text-stroke:0.25px #1f9e4c;">tabspaces</div>
<div class="t" style="left:112.60px;top:68.00px;font-size:12px;line-height:14.00px;color:#3b3b42;font-family:'Liberation Mono', monospace;letter-spacing:-0.6px;-webkit-text-stroke:0.25px #3b3b42;">:</div>
<div class="t" style="left:125.80px;top:68.00px;font-size:12px;line-height:14.00px;color:#4a30d6;font-family:'Liberation Mono', monospace;letter-spacing:-0.6px;-webkit-text-stroke:0.25px #4a30d6;">4</div>
<div class="t" style="left:21.80px;top:83.00px;font-size:12px;line-height:14.00px;color:#adaeb3;font-family:'Liberation Mono', monospace;letter-spacing:-0.6px;">20</div>
<div class="t" style="left:53.20px;top:83.00px;font-size:12px;line-height:14.00px;color:#1f9e4c;font-family:'Liberation Mono', monospace;letter-spacing:-0.6px;-webkit-text-stroke:0.25px #1f9e4c;">live_config_reload</div>
<div class="t" style="left:172.00px;top:83.00px;font-size:12px;line-height:14.00px;color:#3b3b42;font-family:'Liberation Mono', monospace;letter-spacing:-0.6px;-webkit-text-stroke:0.25px #3b3b42;">:</div>
<div class="t" style="left:185.20px;top:83.00px;font-size:12px;line-height:14.00px;color:#4a30d6;font-family:'Liberation Mono', monospace;letter-spacing:-0.6px;-webkit-text-stroke:0.25px #4a30d6;">true</div>
<div class="t" style="left:21.80px;top:98.00px;font-size:12px;line-height:14.00px;color:#adaeb3;font-family:'Liberation Mono', monospace;letter-spacing:-0.6px;">21</div>
<div class="t" style="left:53.20px;top:98.00px;font-size:12px;line-height:14.00px;color:#1f9e4c;font-family:'Liberation Mono', monospace;letter-spacing:-0.6px;-webkit-text-stroke:0.25px #1f9e4c;">alt_send_esc</div>
<div class="t" style="left:132.40px;top:98.00px;font-size:12px;line-height:14.00px;color:#3b3b42;font-family:'Liberation Mono', monospace;letter-spacing:-0.6px;-webkit-text-stroke:0.25px #3b3b42;">:</div>
<div class="t" style="left:145.60px;top:98.00px;font-size:12px;line-height:14.00px;color:#4a30d6;font-family:'Liberation Mono', monospace;letter-spacing:-0.6px;-webkit-text-stroke:0.25px #4a30d6;">true</div>
<div class="t" style="left:21.80px;top:113.00px;font-size:12px;line-height:14.00px;color:#adaeb3;font-family:'Liberation Mono', monospace;letter-spacing:-0.6px;">22</div>
<div class="t" style="left:53.20px;top:113.00px;font-size:12px;line-height:14.00px;color:#1f9e4c;font-family:'Liberation Mono', monospace;letter-spacing:-0.6px;-webkit-text-stroke:0.25px #1f9e4c;">background_opacity</div>
<div class="t" style="left:172.00px;top:113.00px;font-size:12px;line-height:14.00px;color:#3b3b42;font-family:'Liberation Mono', monospace;letter-spacing:-0.6px;-webkit-text-stroke:0.25px #3b3b42;">:</div>
<div class="t" style="left:185.20px;top:113.00px;font-size:12px;line-height:14.00px;color:#4a30d6;font-family:'Liberation Mono', monospace;letter-spacing:-0.6px;-webkit-text-stroke:0.25px #4a30d6;">0.9</div>
<div class="t" style="left:21.80px;top:128.00px;font-size:12px;line-height:14.00px;color:#adaeb3;font-family:'Liberation Mono', monospace;letter-spacing:-0.6px;">23</div>
<div class="t" style="left:53.20px;top:128.00px;font-size:12px;line-height:14.00px;color:#1f9e4c;font-family:'Liberation Mono', monospace;letter-spacing:-0.6px;-webkit-text-stroke:0.25px #1f9e4c;">dynamic_title</div>
<div class="t" style="left:139.00px;top:128.00px;font-size:12px;line-height:14.00px;color:#3b3b42;font-family:'Liberation Mono', monospace;letter-spacing:-0.6px;-webkit-text-stroke:0.25px #3b3b42;">:</div>
<div class="t" style="left:152.20px;top:128.00px;font-size:12px;line-height:14.00px;color:#4a30d6;font-family:'Liberation Mono', monospace;letter-spacing:-0.6px;-webkit-text-stroke:0.25px #4a30d6;">false</div>
<div class="t" style="left:21.80px;top:143.00px;font-size:12px;line-height:14.00px;color:#adaeb3;font-family:'Liberation Mono', monospace;letter-spacing:-0.6px;">24</div>
<div class="t" style="left:53.20px;top:143.00px;font-size:12px;line-height:14.00px;color:#1f9e4c;font-family:'Liberation Mono', monospace;letter-spacing:-0.6px;-webkit-text-stroke:0.25px #1f9e4c;">decorations</div>
<div class="t" style="left:125.80px;top:143.00px;font-size:12px;line-height:14.00px;color:#3b3b42;font-family:'Liberation Mono', monospace;letter-spacing:-0.6px;-webkit-text-stroke:0.25px #3b3b42;">:</div>
<div class="t" style="left:139.00px;top:143.00px;font-size:12px;line-height:14.00px;color:#2c326e;font-family:'Liberation Mono', monospace;letter-spacing:-0.6px;-webkit-text-stroke:0.25px #2c326e;">none</div>
<div class="t" style="left:21.80px;top:159.00px;font-size:12px;line-height:14.00px;color:#adaeb3;font-family:'Liberation Mono', monospace;letter-spacing:-0.6px;">25</div>
<div class="t" style="left:53.20px;top:159.00px;font-size:12px;line-height:14.00px;color:#1f9e4c;font-family:'Liberation Mono', monospace;letter-spacing:-0.6px;-webkit-text-stroke:0.25px #1f9e4c;">draw_bold_text_with_bright_colors</div>
<div class="t" style="left:271.00px;top:159.00px;font-size:12px;line-height:14.00px;color:#3b3b42;font-family:'Liberation Mono', monospace;letter-spacing:-0.6px;-webkit-text-stroke:0.25px #3b3b42;">:</div>
<div class="t" style="left:284.20px;top:159.00px;font-size:12px;line-height:14.00px;color:#4a30d6;font-family:'Liberation Mono', monospace;letter-spacing:-0.6px;-webkit-text-stroke:0.25px #4a30d6;">true</div>
<div class="t" style="left:21.80px;top:174.00px;font-size:12px;line-height:14.00px;color:#adaeb3;font-family:'Liberation Mono', monospace;letter-spacing:-0.6px;">26</div>
<div class="t" style="left:21.80px;top:189.00px;font-size:12px;line-height:14.00px;color:#adaeb3;font-family:'Liberation Mono', monospace;letter-spacing:-0.6px;">27</div>
<div class="t" style="left:53.20px;top:189.00px;font-size:12px;line-height:14.00px;color:#1f9e4c;font-family:'Liberation Mono', monospace;letter-spacing:-0.6px;-webkit-text-stroke:0.25px #1f9e4c;">cursor</div>
<div class="t" style="left:92.80px;top:189.00px;font-size:12px;line-height:14.00px;color:#3b3b42;font-family:'Liberation Mono', monospace;letter-spacing:-0.6px;-webkit-text-stroke:0.25px #3b3b42;">:</div>
<div class="t" style="left:21.80px;top:204.00px;font-size:12px;line-height:14.00px;color:#adaeb3;font-family:'Liberation Mono', monospace;letter-spacing:-0.6px;">28</div>
<div class="t" style="left:66.40px;top:204.00px;font-size:12px;line-height:14.00px;color:#767884;font-family:'Liberation Mono', monospace;letter-spacing:-0.6px;"># </div>
<div class="t" style="left:92.80px;top:204.00px;font-size:12px;line-height:14.00px;color:#767884;font-family:'Liberation Mono', monospace;letter-spacing:-0.6px;">Block</div>
<div class="t" style="left:21.80px;top:219.00px;font-size:12px;line-height:14.00px;color:#adaeb3;font-family:'Liberation Mono', monospace;letter-spacing:-0.6px;">29</div>
<div class="t" style="left:66.40px;top:219.00px;font-size:12px;line-height:14.00px;color:#767884;font-family:'Liberation Mono', monospace;letter-spacing:-0.6px;"># _ Underline</div>
<div class="t" style="left:21.80px;top:235.00px;font-size:12px;line-height:14.00px;color:#adaeb3;font-family:'Liberation Mono', monospace;letter-spacing:-0.6px;">30</div>
<div class="t" style="left:66.40px;top:235.00px;font-size:12px;line-height:14.00px;color:#767884;font-family:'Liberation Mono', monospace;letter-spacing:-0.6px;"># | Beam</div>
<div class="t" style="left:21.80px;top:250.00px;font-size:12px;line-height:14.00px;color:#adaeb3;font-family:'Liberation Mono', monospace;letter-spacing:-0.6px;">31</div>
<div class="t" style="left:66.40px;top:250.00px;font-size:12px;line-height:14.00px;color:#1f9e4c;font-family:'Liberation Mono', monospace;letter-spacing:-0.6px;-webkit-text-stroke:0.25px #1f9e4c;">style</div>
<div class="t" style="left:99.40px;top:250.00px;font-size:12px;line-height:14.00px;color:#3b3b42;font-family:'Liberation Mono', monospace;letter-spacing:-0.6px;-webkit-text-stroke:0.25px #3b3b42;">:</div>
<div class="t" style="left:112.60px;top:250.00px;font-size:12px;line-height:14.00px;color:#2c326e;font-family:'Liberation Mono', monospace;letter-spacing:-0.6px;-webkit-text-stroke:0.25px #2c326e;">Underline</div>
<div class="t" style="left:21.80px;top:265.00px;font-size:12px;line-height:14.00px;color:#adaeb3;font-family:'Liberation Mono', monospace;letter-spacing:-0.6px;">32</div>
<div class="t" style="left:66.40px;top:265.00px;font-size:12px;line-height:14.00px;color:#1f9e4c;font-family:'Liberation Mono', monospace;letter-spacing:-0.6px;-webkit-text-stroke:0.25px #1f9e4c;">unfocused_hollow</div>
<div class="t" style="left:172.00px;top:265.00px;font-size:12px;line-height:14.00px;color:#3b3b42;font-family:'Liberation Mono', monospace;letter-spacing:-0.6px;-webkit-text-stroke:0.25px #3b3b42;">:</div>
<div class="t" style="left:185.20px;top:265.00px;font-size:12px;line-height:14.00px;color:#4a30d6;font-family:'Liberation Mono', monospace;letter-spacing:-0.6px;-webkit-text-stroke:0.25px #4a30d6;">true</div>
<div class="t" style="left:21.80px;top:280.00px;font-size:12px;line-height:14.00px;color:#adaeb3;font-family:'Liberation Mono', monospace;letter-spacing:-0.6px;">33</div>
<div class="t" style="left:21.80px;top:295.00px;font-size:12px;line-height:14.00px;color:#adaeb3;font-family:'Liberation Mono', monospace;letter-spacing:-0.6px;">34</div>
<div class="t" style="left:53.20px;top:295.00px;font-size:12px;line-height:14.00px;color:#1f9e4c;font-family:'Liberation Mono', monospace;letter-spacing:-0.6px;-webkit-text-stroke:0.25px #1f9e4c;">font</div>
<div class="t" style="left:79.60px;top:295.00px;font-size:12px;line-height:14.00px;color:#3b3b42;font-family:'Liberation Mono', monospace;letter-spacing:-0.6px;-webkit-text-stroke:0.25px #3b3b42;">:</div>
<div class="t" style="left:21.80px;top:310.00px;font-size:12px;line-height:14.00px;color:#adaeb3;font-family:'Liberation Mono', monospace;letter-spacing:-0.6px;">35</div>
<div class="t" style="left:66.40px;top:310.00px;font-size:12px;line-height:14.00px;color:#1f9e4c;font-family:'Liberation Mono', monospace;letter-spacing:-0.6px;-webkit-text-stroke:0.25px #1f9e4c;">size</div>
<div class="t" style="left:92.80px;top:310.00px;font-size:12px;line-height:14.00px;color:#3b3b42;font-family:'Liberation Mono', monospace;letter-spacing:-0.6px;-webkit-text-stroke:0.25px #3b3b42;">:</div>
<div class="t" style="left:106.00px;top:310.00px;font-size:12px;line-height:14.00px;color:#4a30d6;font-family:'Liberation Mono', monospace;letter-spacing:-0.6px;-webkit-text-stroke:0.25px #4a30d6;">12.0</div>
<div class="t" style="left:21.80px;top:326.00px;font-size:12px;line-height:14.00px;color:#adaeb3;font-family:'Liberation Mono', monospace;letter-spacing:-0.6px;">36</div>
<div class="t" style="left:66.40px;top:326.00px;font-size:12px;line-height:14.00px;color:#1f9e4c;font-family:'Liberation Mono', monospace;letter-spacing:-0.6px;-webkit-text-stroke:0.25px #1f9e4c;">normal</div>
<div class="t" style="left:106.00px;top:326.00px;font-size:12px;line-height:14.00px;color:#3b3b42;font-family:'Liberation Mono', monospace;letter-spacing:-0.6px;-webkit-text-stroke:0.25px #3b3b42;">:</div>
<div class="t" style="left:21.80px;top:341.00px;font-size:12px;line-height:14.00px;color:#adaeb3;font-family:'Liberation Mono', monospace;letter-spacing:-0.6px;">37</div>
<div class="t" style="left:79.60px;top:341.00px;font-size:12px;line-height:14.00px;color:#1f9e4c;font-family:'Liberation Mono', monospace;letter-spacing:-0.6px;-webkit-text-stroke:0.25px #1f9e4c;">family</div>
<div class="t" style="left:119.20px;top:341.00px;font-size:12px;line-height:14.00px;color:#3b3b42;font-family:'Liberation Mono', monospace;letter-spacing:-0.6px;-webkit-text-stroke:0.25px #3b3b42;">:</div>
<div class="t" style="left:132.40px;top:341.00px;font-size:12px;line-height:14.00px;color:#2c326e;font-family:'Liberation Mono', monospace;letter-spacing:-0.6px;-webkit-text-stroke:0.25px #2c326e;">JetBrains Mono</div>
<div class="t" style="left:21.80px;top:356.00px;font-size:12px;line-height:14.00px;color:#adaeb3;font-family:'Liberation Mono', monospace;letter-spacing:-0.6px;">38</div>
<div class="t" style="left:79.60px;top:356.00px;font-size:12px;line-height:14.00px;color:#1f9e4c;font-family:'Liberation Mono', monospace;letter-spacing:-0.6px;-webkit-text-stroke:0.25px #1f9e4c;">style</div>
<div class="t" style="left:112.60px;top:356.00px;font-size:12px;line-height:14.00px;color:#3b3b42;font-family:'Liberation Mono', monospace;letter-spacing:-0.6px;-webkit-text-stroke:0.25px #3b3b42;">:</div>
<div class="t" style="left:125.80px;top:356.00px;font-size:12px;line-height:14.00px;color:#2c326e;font-family:'Liberation Mono', monospace;letter-spacing:-0.6px;-webkit-text-stroke:0.25px #2c326e;">Regular</div>
<div class="t" style="left:21.80px;top:371.00px;font-size:12px;line-height:14.00px;color:#adaeb3;font-family:'Liberation Mono', monospace;letter-spacing:-0.6px;">39</div>
<div class="t" style="left:66.40px;top:371.00px;font-size:12px;line-height:14.00px;color:#1f9e4c;font-family:'Liberation Mono', monospace;letter-spacing:-0.6px;-webkit-text-stroke:0.25px #1f9e4c;">bold</div>
<div class="t" style="left:92.80px;top:371.00px;font-size:12px;line-height:14.00px;color:#3b3b42;font-family:'Liberation Mono', monospace;letter-spacing:-0.6px;-webkit-text-stroke:0.25px #3b3b42;">:</div>
<div class="t" style="left:21.80px;top:386.00px;font-size:12px;line-height:14.00px;color:#adaeb3;font-family:'Liberation Mono', monospace;letter-spacing:-0.6px;">40</div>
<div class="t" style="left:79.60px;top:386.00px;font-size:12px;line-height:14.00px;color:#1f9e4c;font-family:'Liberation Mono', monospace;letter-spacing:-0.6px;-webkit-text-stroke:0.25px #1f9e4c;">family</div>
<div class="t" style="left:119.20px;top:386.00px;font-size:12px;line-height:14.00px;color:#3b3b42;font-family:'Liberation Mono', monospace;letter-spacing:-0.6px;-webkit-text-stroke:0.25px #3b3b42;">:</div>
<div class="t" style="left:132.40px;top:386.00px;font-size:12px;line-height:14.00px;color:#2c326e;font-family:'Liberation Mono', monospace;letter-spacing:-0.6px;-webkit-text-stroke:0.25px #2c326e;">JetBrains Mono</div>
<div class="t" style="left:21.80px;top:402.00px;font-size:12px;line-height:14.00px;color:#adaeb3;font-family:'Liberation Mono', monospace;letter-spacing:-0.6px;">41</div>
<div class="t" style="left:79.60px;top:402.00px;font-size:12px;line-height:14.00px;color:#1f9e4c;font-family:'Liberation Mono', monospace;letter-spacing:-0.6px;-webkit-text-stroke:0.25px #1f9e4c;">style</div>
<div class="t" style="left:112.60px;top:402.00px;font-size:12px;line-height:14.00px;color:#3b3b42;font-family:'Liberation Mono', monospace;letter-spacing:-0.6px;-webkit-text-stroke:0.25px #3b3b42;">:</div>
<div class="t" style="left:125.80px;top:402.00px;font-size:12px;line-height:14.00px;color:#2c326e;font-family:'Liberation Mono', monospace;letter-spacing:-0.6px;-webkit-text-stroke:0.25px #2c326e;">Bold</div>
<div class="t" style="left:21.80px;top:417.00px;font-size:12px;line-height:14.00px;color:#adaeb3;font-family:'Liberation Mono', monospace;letter-spacing:-0.6px;">42</div>
<div class="t" style="left:66.40px;top:417.00px;font-size:12px;line-height:14.00px;color:#1f9e4c;font-family:'Liberation Mono', monospace;letter-spacing:-0.6px;-webkit-text-stroke:0.25px #1f9e4c;">italic</div>
<div class="t" style="left:106.00px;top:417.00px;font-size:12px;line-height:14.00px;color:#3b3b42;font-family:'Liberation Mono', monospace;letter-spacing:-0.6px;-webkit-text-stroke:0.25px #3b3b42;">:</div>
<div class="t" style="left:21.80px;top:432.00px;font-size:12px;line-height:14.00px;color:#adaeb3;font-family:'Liberation Mono', monospace;letter-spacing:-0.6px;">43</div>
<div class="t" style="left:79.60px;top:432.00px;font-size:12px;line-height:14.00px;color:#1f9e4c;font-family:'Liberation Mono', monospace;letter-spacing:-0.6px;-webkit-text-stroke:0.25px #1f9e4c;">family</div>
<div class="t" style="left:119.20px;top:432.00px;font-size:12px;line-height:14.00px;color:#3b3b42;font-family:'Liberation Mono', monospace;letter-spacing:-0.6px;-webkit-text-stroke:0.25px #3b3b42;">:</div>
<div class="t" style="left:132.40px;top:432.00px;font-size:12px;line-height:14.00px;color:#2c326e;font-family:'Liberation Mono', monospace;letter-spacing:-0.6px;-webkit-text-stroke:0.25px #2c326e;">JetBrains Mono</div>
<div style="left:79.39999999999998px;top:205.3px;width:6.5px;height:12.4px;background:#6b7080;"></div>
<div style="left:53.19999999999999px;top:21.38500000000002px;width:1px;height:30.38500000000002px;background:#ebebf0;"></div>
<div style="left:53.19999999999999px;top:203.60500000000002px;width:1px;height:75.94px;background:#ebebf0;"></div>
<div style="left:53.19999999999999px;top:309.9px;width:1px;height:136.68000000000006px;background:#ebebf0;"></div>
<div style="left:66.39999999999998px;top:340.27px;width:1px;height:30.385000000000105px;background:#ebebf0;"></div>
<div style="left:66.39999999999998px;top:385.82499999999993px;width:1px;height:30.385000000000105px;background:#ebebf0;"></div>
<div style="left:66.39999999999998px;top:431.38px;width:1px;height:15.200000000000045px;background:#ebebf0;"></div>
</div>
<div style="left:408px;top:206px;width:746px;height:3px;background:linear-gradient(rgba(220,222,228,.8),rgba(255,255,255,0));"></div>
<svg style="left:215.5px;top:643px" width="12" height="11" viewBox="0 0 12 11"><path d="M4 3.8 L6.8 6.3 L4 8.8 M10.4 1.2 L7.6 3.7 L10.4 6.2" stroke="#fff" stroke-width=".9" fill="none"/></svg>
<svg style="left:240px;top:643px" width="9" height="10" viewBox="0 0 9 10"><circle cx="2" cy="1.6" r="1.1" stroke="#55575f" stroke-width=".8" fill="none"/><circle cx="2" cy="8.3" r="1.1" stroke="#55575f" stroke-width=".8" fill="none"/><circle cx="7" cy="2.6" r="1.1" stroke="#55575f" stroke-width=".8" fill="none"/><path d="M2 2.7 V7.2 M6.4 3.6 Q5.6 5.6 2.4 6.6" stroke="#55575f" stroke-width=".8" fill="none"/></svg>
<div class="t" style="left:252.00px;top:644.00px;font-size:8.09px;line-height:9.00px;color:#5d5e66;font-family:'Liberation Sans', sans-serif;transform:scaleY(1.186);transform-origin:0 7px;">master* (Rebasing)</div>
<svg style="left:332.5px;top:643.5px" width="10" height="9" viewBox="0 0 10 9"><ellipse cx="5" cy="4.6" rx="2.9" ry="3.4" stroke="#55575f" stroke-width=".8" fill="none"/><path d="M0.3 4.9 L2.6 3.6 L2.8 5.6Z M9.7 4.3 L7.4 5.6 L7.2 3.4Z" fill="#55575f"/></svg>
<div class="t" style="left:353.50px;top:643.00px;font-size:8.49px;line-height:10.00px;color:#5d5e66;font-family:'Liberation Sans', sans-serif;transform:scaleY(1.130);transform-origin:0 8px;">Python 3.9.9 64-bit</div>
<svg style="left:436px;top:644px" width="9" height="9" viewBox="0 0 9 9"><circle cx="4.5" cy="4.5" r="3.8" stroke="#55575f" stroke-width=".8" fill="none"/><path d="M3 3 L6 6 M6 3 L3 6" stroke="#55575f" stroke-width=".8"/></svg>
<div class="t" style="left:447.60px;top:643.00px;font-size:8.81px;line-height:10.00px;color:#5d5e66;font-family:'Liberation Sans', sans-serif;transform:scaleY(1.089);transform-origin:0 8px;">0</div>
<svg style="left:454.5px;top:643.5px" width="9.5" height="9" viewBox="0 0 9.5 9"><path d="M4.75 0.8 L8.8 8.2 H0.7Z" stroke="#55575f" stroke-width=".8" fill="none"/><path d="M4.75 3.2 V5.8 M4.75 6.6 V7.3" stroke="#55575f" stroke-width=".8"/></svg>
<div class="t" style="left:466.00px;top:644.00px;font-size:8.09px;line-height:9.00px;color:#5d5e66;font-family:'Liberation Sans', sans-serif;transform:scaleY(1.186);transform-origin:0 7px;">10</div>
<div class="t" style="left:934.80px;top:644.00px;font-size:7.48px;line-height:9.00px;color:#5d5e66;font-family:'Liberation Sans', sans-serif;transform:scaleY(1.244);transform-origin:0 7px;">Ln 1, Col 1</div>
<div class="t" style="left:981.90px;top:644.00px;font-size:7.6px;line-height:9.00px;color:#5d5e66;font-family:'Liberation Sans', sans-serif;transform:scaleY(1.224);transform-origin:0 7px;">Spaces: 2</div>
<div class="t" style="left:1026.70px;top:644.00px;font-size:8.23px;line-height:9.00px;color:#5d5e66;font-family:'Liberation Sans', sans-serif;transform:scaleY(1.130);transform-origin:0 7px;">UTF-8</div>
<div class="t" style="left:1061.00px;top:644.00px;font-size:7.71px;line-height:9.00px;color:#5d5e66;font-family:'Liberation Sans', sans-serif;transform:scaleY(1.207);transform-origin:0 7px;">LF</div>
<div class="t" style="left:1081.30px;top:644.00px;font-size:7.81px;line-height:9.00px;color:#5d5e66;font-family:'Liberation Sans', sans-serif;transform:scaleY(1.191);transform-origin:0 7px;">YAML</div>
<svg style="left:1114px;top:643.5px" width="10" height="10" viewBox="0 0 10 10"><circle cx="3.6" cy="3.4" r="1.8" stroke="#55575f" stroke-width=".8" fill="none"/><path d="M0.8 9 Q1.2 5.8 3.6 5.8 Q6 5.8 6.4 9 M5.6 0.8 H9.2 V4.4 H7.6 L6.6 5.2" stroke="#55575f" stroke-width=".8" fill="none"/></svg>
<svg style="left:1134px;top:642.6px" width="10" height="10" viewBox="0 0 10 10"><path d="M1.2 7.4 H8.8 L7.8 6.2 V3.8 A2.8 2.8 0 0 0 2.2 3.8 V6.2Z M3.8 8.6 A1.2 1.2 0 0 0 6.2 8.6" stroke="#55575f" stroke-width=".8" fill="none"/></svg>
<div style="left:1206px;top:163px;width:160px;height:478px;background:#ffffff;overflow:hidden;">
<div style="left:0px;top:0px;width:28px;height:22px;background:#dee1e6;border-bottom-right-radius:5px;"></div>
<svg style="left:8px;top:8px" width="7" height="7" viewBox="0 0 7 7"><path d="M0.6 0.6 L6.4 6.4 M6.4 0.6 L0.6 6.4" stroke="#8a8d91" stroke-width="1"/></svg>
<svg style="left:36px;top:7.5px" width="10.5" height="7.5" viewBox="0 0 10.5 7.5"><rect x="0" y="0" width="10.4" height="7.4" rx="1.8" fill="#ff0000"/><path d="M4 2 L7.2 3.7 L4 5.4Z" fill="#fff"/></svg>
<div class="t" style="left:52.00px;top:5.00px;font-size:10px;line-height:11.00px;color:#5f6368;font-family:'Liberation Sans', sans-serif;letter-spacing:-0.031px;">Motionless In White</div>
<div class="t" style="left:141.00px;top:5.00px;font-size:10px;line-height:11.00px;color:#d6d8da;font-family:'Liberation Sans', sans-serif;letter-spacing:-0.445px;">- /</div>
<svg style="left:156.5999999999999px;top:7.400000000000006px" width="6" height="6.6" viewBox="0 0 6 6.6"><path d="M0 2 H1.6 L4.6 0 V6.6 L1.6 4.6 H0Z" fill="#5f6368"/></svg>
<svg style="left:9.5px;top:30.5px" width="10" height="9" viewBox="0 0 10 9"><path d="M9.4 4.5 H1.2 M4.8 0.8 L1 4.5 L4.8 8.2" stroke="#5f6368" stroke-width="1.3" fill="none"/></svg>
<svg style="left:30.5px;top:30.5px" width="10" height="9" viewBox="0 0 10 9"><path d="M0.6 4.5 H8.8 M5.2 0.8 L9 4.5 L5.2 8.2" stroke="#b5b8bc" stroke-width="1.3" fill="none"/></svg>
<svg style="left:51.299999999999955px;top:30.30000000000001px" width="10" height="10" viewBox="0 0 10 10"><path d="M8.2 5.4 A3.6 3.6 0 1 1 7.2 2.3" stroke="#5f6368" stroke-width="1.3" fill="none"/><path d="M9.2 0.6 V4.2 H5.6Z" fill="#5f6368"/></svg>
<div style="left:70.5px;top:25px;width:120px;height:20px;background:#f1f3f4;border-radius:10px;"></div>
<svg style="left:79px;top:30.80000000000001px" width="6.5" height="8" viewBox="0 0 6.5 8"><rect x="0.2" y="3.4" width="6.1" height="4.6" rx=".6" fill="#5f6368"/><path d="M1.5 3.6 V2.4 A1.75 1.75 0 0 1 5 2.4 V3.6" stroke="#5f6368" stroke-width="1" fill="none"/></svg>
<div class="t" style="left:92.50px;top:29.00px;font-size:10px;line-height:11.00px;color:#3c4043;font-family:'Liberation Sans', sans-serif;letter-spacing:-0.25px;">youtube.com/watch?v=</div>
<div style="left:0px;top:48px;width:160px;height:1px;background:#dadce0;"></div>
<svg style="left:17.799999999999955px;top:62px" width="12.5" height="9.5" viewBox="0 0 12.5 9.5"><path d="M0 0.8 H12.3 M0 4.7 H12.3 M0 8.6 H12.3" stroke="#030303" stroke-width="1.1"/></svg>
<svg style="left:46.90000000000009px;top:60.19999999999999px" width="18.5" height="13" viewBox="0 0 18.5 13"><rect x="0" y="0" width="18.4" height="13" rx="3.2" fill="#ff0000"/><path d="M7.3 3.7 L12.3 6.5 L7.3 9.3Z" fill="#fff"/></svg>
<div class="t" style="left:67.60px;top:59.00px;font-size:16px;line-height:17.00px;color:#282828;font-family:'Liberation Sans', sans-serif;font-weight:bold;transform:scaleX(0.62);transform-origin:0 0;letter-spacing:-0.6px;">YouTube</div>
<div class="t" style="left:108.00px;top:56.00px;font-size:6.5px;line-height:7.00px;color:#606060;font-family:'Liberation Sans', sans-serif;letter-spacing:-1.016px;">UA</div>
<div style="left:1px;top:85px;width:159px;height:393px;background:#f9f9f9;"></div>
<div style="left:23px;top:100.5px;width:137px;height:310.5px;background:#000000;"></div>
<div class="t" style="left:23.50px;top:426.00px;font-size:11.8px;line-height:14.00px;color:#0f0f0f;font-family:'Liberation Sans', sans-serif;">Motionless In White - Another Life</div>
<div class="t" style="left:23.50px;top:449.00px;font-size:9.4px;line-height:11.00px;color:#606060;font-family:'Liberation Sans', sans-serif;letter-spacing:-0.18px;">21,287,857 views • Premiered Dec 2020</div>
<div style="left:23px;top:473px;width:137px;height:1px;background:#e5e5e5;"></div>
</div>
<svg style="left:654px;top:614.5px;filter:drop-shadow(0 1px 2px rgba(0,0,0,.45))" width="56" height="56" viewBox="0 0 100 100"><path d="M96.46 10.8 L75.86 0.87 C73.47 -0.27 70.62 0.21 68.75 2.08 L1.3 63.58 C-0.52 65.24 -0.51 68.09 1.3 69.75 L6.81 74.75 C8.3 76.1 10.53 76.2 12.13 74.99 L93.36 13.37 C96.09 11.3 100 13.25 100 16.67 V16.43 C100 14.03 98.62 11.84 96.46 10.8Z" fill="#0a71b5"/>
<path d="M96.46 89.2 L75.86 99.12 C73.47 100.27 70.62 99.79 68.75 97.92 L1.3 36.42 C-0.52 34.76 -0.51 31.91 1.3 30.25 L6.81 25.25 C8.3 23.9 10.53 23.8 12.13 25.01 L93.36 86.63 C96.09 88.7 100 86.75 100 83.33 V83.57 C100 85.97 98.62 88.16 96.46 89.2Z" fill="#0d8fdc"/>
<path d="M75.86 99.13 C73.47 100.27 70.62 99.79 68.75 97.92 C71.06 100.22 75 98.59 75 95.33 V4.67 C75 1.41 71.06 -0.22 68.75 2.08 C70.62 0.21 73.47 -0.27 75.86 0.87 L96.46 10.78 C98.62 11.82 100 14.01 100 16.41 V83.59 C100 85.99 98.62 88.18 96.46 89.22Z" fill="#1fa9f4"/></svg>
<div style="left:490px;top:686px;width:385px;height:66px;background:#3a3a3a;border-radius:22px;"></div>
<svg style="left:510.9px;top:705.8px" width="28.2" height="26.4" viewBox="0 0 28.2 26.4"><rect x="1.9" y="0" width="24.2" height="2.3" fill="#f4511e"/><rect x="0" y="2.1" width="28.2" height="24.3" rx="1.8" fill="#a0a0a0"/><rect x="3.2" y="5.1" width="21.9" height="17.8" fill="#13202b"/><path d="M12.6 6.7 H15.6 L22.6 21.4 H19.4 L14.1 10.4 L8.8 21.4 H5.6Z" fill="#f59a1d"/><path d="M14.1 12 L16 16.6 L14.9 17 L14.9 22 H13.3 V17 L12.2 16.6Z" fill="#52a7f8"/></svg>
<svg style="left:561px;top:704.8px" width="28.4" height="28.4" viewBox="0 0 28.4 28.4"><path d="M1.90 7.10 A14.2 14.2 0 0 1 26.50 7.10 L14.20 7.10 L14.2 14.2 L8.05 17.75Z" fill="#db4437"/><path d="M26.50 7.10 A14.2 14.2 0 0 1 14.20 28.40 L20.35 17.75 L14.2 14.2 L14.20 7.10Z" fill="#fbc935"/><path d="M14.20 28.40 A14.2 14.2 0 0 1 1.90 7.10 L8.05 17.75 L14.2 14.2 L20.35 17.75Z" fill="#1fa05a"/><circle cx="14.2" cy="14.2" r="6.9" fill="#fff"/><circle cx="14.2" cy="14.2" r="5.0" fill="#4a86f0"/></svg>
<div style="left:572px;top:736px;width:5px;height:5px;border-radius:50%;background:#e8e8e8"></div>
<svg style="left:611px;top:705px" width="28" height="28" viewBox="0 0 28 28"><circle cx="14" cy="14" r="14" fill="#6c66b6"/><path d="M10.4 7.6 C14 7.4 18.6 5.6 21.2 6.2 C22.4 6.8 21.2 7.8 19.6 7.6" stroke="#fff" stroke-width="1.6" fill="none" stroke-linecap="round"/><path d="M10.8 8.2 C13 10.4 16 12 18.2 14.2 C13 14 7.2 14.6 6.8 16.4 C6.8 18.6 15 20 20.6 22" stroke="#fff" stroke-width="2.4" fill="none" stroke-linecap="round" stroke-linejoin="round"/><path d="M20.6 22 C17 22.6 12.6 22.4 9.6 22.4" stroke="#fff" stroke-width="1.4" fill="none" stroke-linecap="round"/></svg>
<svg style="left:661px;top:704px" width="28.5" height="29.5" viewBox="0 0 28.5 29.5"><rect x="6" y="0" width="16.5" height="4" rx="1.5" fill="#4a90d9"/><rect x="4" y="3" width="20.5" height="4" rx="1.5" fill="#6cc04a"/><rect x="2" y="6" width="24.5" height="4" rx="1.5" fill="#f6c342"/><rect x="0" y="8.7" width="28.5" height="20.8" rx="1.8" fill="#959595"/><rect x="9" y="16.8" width="10.5" height="3.4" rx=".8" fill="#ececec"/></svg>
<svg style="left:711px;top:705px" width="28" height="28" viewBox="0 0 28 28"><circle cx="14" cy="14" r="14" fill="#5ea547"/><circle cx="14.1" cy="8.6" r="6.1" fill="#fff"/><path d="M10.9 12.5 H17.3 V15.8 L19 17.2 L17.6 18.6 L19 20 L17.6 21.4 V23.6 L14.2 25.3 L10.9 23.6 Z" fill="#fff"/><circle cx="14" cy="7.1" r="3" fill="#5ea547"/><rect x="12" y="15.9" width="1" height="6.2" fill="#5ea547"/></svg>
<div style="left:757px;top:702.8px;width:1px;height:32px;background:#5f5f5f;"></div>
<svg style="left:776px;top:704.6px" width="28.4" height="28.6" viewBox="0 0 100 100"><path d="M96.46 10.8 L75.86 0.87 C73.47 -0.27 70.62 0.21 68.75 2.08 L1.3 63.58 C-0.52 65.24 -0.51 68.09 1.3 69.75 L6.81 74.75 C8.3 76.1 10.53 76.2 12.13 74.99 L93.36 13.37 C96.09 11.3 100 13.25 100 16.67 V16.43 C100 14.03 98.62 11.84 96.46 10.8Z" fill="#0a71b5"/>
<path d="M96.46 89.2 L75.86 99.12 C73.47 100.27 70.62 99.79 68.75 97.92 L1.3 36.42 C-0.52 34.76 -0.51 31.91 1.3 30.25 L6.81 25.25 C8.3 23.9 10.53 23.8 12.13 25.01 L93.36 86.63 C96.09 88.7 100 86.75 100 83.33 V83.57 C100 85.97 98.62 88.16 96.46 89.2Z" fill="#0d8fdc"/>
<path d="M75.86 99.13 C73.47 100.27 70.62 99.79 68.75 97.92 C71.06 100.22 75 98.59 75 95.33 V4.67 C75 1.41 71.06 -0.22 68.75 2.08 C70.62 0.21 73.47 -0.27 75.86 0.87 L96.46 10.78 C98.62 11.82 100 14.01 100 16.41 V83.59 C100 85.99 98.62 88.18 96.46 89.22Z" fill="#1fa9f4"/></svg>
<div style="left:787px;top:736px;width:5px;height:5px;border-radius:50%;background:#e8e8e8"></div>
<div style="left:830.0px;top:709.0px;width:4.2px;height:4.2px;background:#ffffff;border-radius:.5px;"></div>
<div style="left:838.1px;top:709.0px;width:4.2px;height:4.2px;background:#ffffff;border-radius:.5px;"></div>
<div style="left:846.2px;top:709.0px;width:4.2px;height:4.2px;background:#ffffff;border-radius:.5px;"></div>
<div style="left:830.0px;top:717.1px;width:4.2px;height:4.2px;background:#ffffff;border-radius:.5px;"></div>
<div style="left:838.1px;top:717.1px;width:4.2px;height:4.2px;background:#ffffff;border-radius:.5px;"></div>
<div style="left:846.2px;top:717.1px;width:4.2px;height:4.2px;background:#ffffff;border-radius:.5px;"></div>
<div style="left:830.0px;top:725.2px;width:4.2px;height:4.2px;background:#ffffff;border-radius:.5px;"></div>
<div style="left:838.1px;top:725.2px;width:4.2px;height:4.2px;background:#ffffff;border-radius:.5px;"></div>
<div style="left:846.2px;top:725.2px;width:4.2px;height:4.2px;background:#ffffff;border-radius:.5px;"></div>
</div></body></html>
